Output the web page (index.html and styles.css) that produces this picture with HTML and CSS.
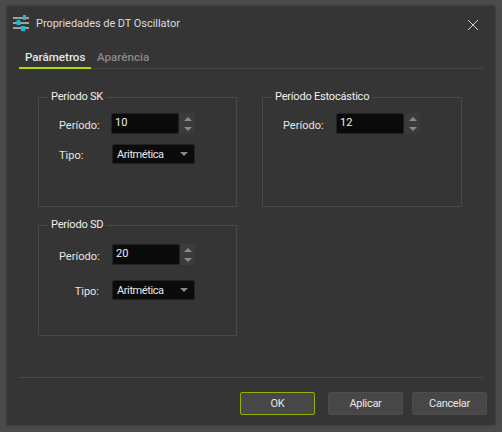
FILE: index.html
```html
<!DOCTYPE html>
<html lang="pt">
<head>
<meta charset="utf-8">
<title>Propriedades de DT Oscillator</title>
<link rel="stylesheet" href="styles.css">
</head>
<body>
<div class="dialog">
  <header class="titlebar">
    <svg class="app-icon" width="17" height="17" viewBox="0 0 17 17">
      <rect x="0" y="2" width="16" height="2" fill="#a0a0a0"/>
      <rect x="0" y="7" width="16" height="2" fill="#a0a0a0"/>
      <rect x="0" y="12" width="16" height="2" fill="#a0a0a0"/>
      <rect x="10" y="0" width="3" height="5" fill="#12bcd4"/>
      <rect x="3.5" y="5" width="4" height="5" fill="#12bcd4"/>
      <rect x="8" y="11" width="4" height="5" fill="#12bcd4"/>
    </svg>
    <span class="title">Propriedades de DT Oscillator</span>
    <svg class="close" width="12" height="12" viewBox="0 0 12 12">
      <path d="M1 1 L11 11 M11 1 L1 11" stroke="#d0d0d0" stroke-width="1" fill="none"/>
    </svg>
  </header>
  <nav class="tabs">
    <span class="tab active">Parâmetros</span>
    <span class="tab">Aparência</span>
  </nav>
  <main class="groups">
    <fieldset class="group">
      <legend>Período SK</legend>
      <div class="row row-first">
        <label class="lbl">Período:</label>
        <span class="input">10</span>
        <span class="spin"><i class="up"></i><i class="down"></i></span>
      </div>
      <div class="row row-type">
        <label class="lbl">Tipo:</label>
        <span class="select">Aritmética<i class="down"></i></span>
      </div>
    </fieldset>
    <fieldset class="group">
      <legend>Período Estocástico</legend>
      <div class="row row-first">
        <label class="lbl lbl-wide">Período:</label>
        <span class="input">12</span>
        <span class="spin"><i class="up"></i><i class="down"></i></span>
      </div>
    </fieldset>
    <fieldset class="group">
      <legend>Período SD</legend>
      <div class="row row-sd">
        <label class="lbl lbl-sd">Período:</label>
        <span class="input">20</span>
        <span class="spin spin-sd"><i class="up"></i><i class="down"></i></span>
      </div>
      <div class="row row-sdtype">
        <label class="lbl lbl-sd">Tipo:</label>
        <span class="select select-sd">Aritmética<i class="down"></i></span>
      </div>
    </fieldset>
  </main>
  <footer class="footer">
    <button class="btn primary">OK</button>
    <button class="btn">Aplicar</button>
    <button class="btn">Cancelar</button>
  </footer>
</div>
</body>
</html>
```
FILE: styles.css
```css
* { box-sizing: border-box; }
html, body { height: 100%; }
body {
  margin: 0;
  padding: 6px 7px 7px 7px;
  background: #4b4b4b;
  font-family: Roboto, "Open Sans", sans-serif;
  font-size: 11px;
  color: #e8e8e8;
  overflow: hidden;
}
.dialog {
  height: 419px;
  background: #353535;
  padding: 0 12px;
  display: flex;
  flex-direction: column;
  box-shadow: 0 0 2px #2c2c2c;
}
.titlebar {
  height: 33px;
  display: flex;
  align-items: center;
  margin-top: 1px;
}
.app-icon { margin-left: -6px; margin-right: 6px; }
.title { color: #d8dce0; font-size: 11px; letter-spacing: -0.05px; }
.close { margin-left: auto; margin-right: 4px; margin-top: 3px; }
.tabs {
  margin-top: 9px;
  height: 20px;
  display: flex;
  border-bottom: 1px solid #4a4a4a;
  font-weight: 500;
}
.tab {
  color: #8a8a8a;
  padding: 0 6px;
  height: 20px;
  font-size: 11.6px;
  line-height: 16px;
}
.tab.active {
  color: #e4e8ea;
  width: 72px;
  border-bottom: 2px solid #a8e000;
}
.groups {
  flex: 0 0 auto;
  display: grid;
  grid-template-columns: 199px 200px;
  grid-template-rows: 119px 120px;
  column-gap: 25px;
  row-gap: 9px;
  margin: 19px 0 0 19px;
}
.group {
  margin: 0;
  padding: 0;
  min-width: 0;
  border: 1px solid #4a4a4a;
  border-radius: 1px;
  display: block;
}
legend {
  margin-left: 9px;
  padding: 2px 3px 3px;
  font-size: 11px;
  letter-spacing: -0.2px;
  line-height: 14px;
  color: #f0f0f0;
}
.row { display: flex; align-items: center; margin-left: 20px; }
.row-first { margin-top: 6px; }
.row-type { margin-top: 10px; }
.row-sd { margin-top: 9px; }
.row-sdtype { margin-top: 15px; }
.lbl { width: 52px; padding-top: 3px; color: #e6e6e0; flex: none; }
.lbl-wide { width: 53px; }
.lbl-sd { width: 53px; padding-right: 13px; text-align: right; }
.input {
  width: 68px;
  height: 21px;
  background: #0a0a0a;
  border: 1px solid #222;
  border-radius: 2px;
  padding-left: 3px;
  line-height: 18px;
  color: #f0f0f0;
  flex: none;
}
.spin {
  width: 15px;
  height: 21px;
  margin-left: 1px;
  background: #3b3b3b;
  display: flex;
  flex-direction: column;
  align-items: center;
  justify-content: center;
  gap: 6px;
  flex: none;
}
.spin-sd { margin-left: 0; }
.up, .down { display: block; width: 0; height: 0; border-left: 4px solid transparent; border-right: 4px solid transparent; }
.up { border-bottom: 4px solid #8a8a8a; }
.down { border-top: 4px solid #8a8a8a; }
.select {
  width: 83px;
  height: 20px;
  margin-left: 1px;
  background: #0a0a0a;
  border: 1px solid #222;
  border-radius: 2px;
  padding: 0 6px 0 4px;
  display: flex;
  align-items: center;
  justify-content: space-between;
  color: #e8e8e8;
  letter-spacing: -0.4px;
  flex: none;
}
.select-sd { margin-left: 0; }
.footer {
  margin-top: 41px;
  border-top: 1px solid #4a4a4a;
  padding: 14px 0 0 221px;
  display: flex;
}
.btn {
  flex: none;
  width: 75px;
  height: 23px;
  padding: 0;
  font: inherit;
  letter-spacing: -0.3px;
  color: #e6e8ea;
  background: #474747;
  border: 1px solid #4d4d4d;
  border-radius: 2px;
}
.btn.primary { border-color: #8fb400; margin-right: 13px; }
.btn + .btn + .btn { margin-left: 9px; }
```
